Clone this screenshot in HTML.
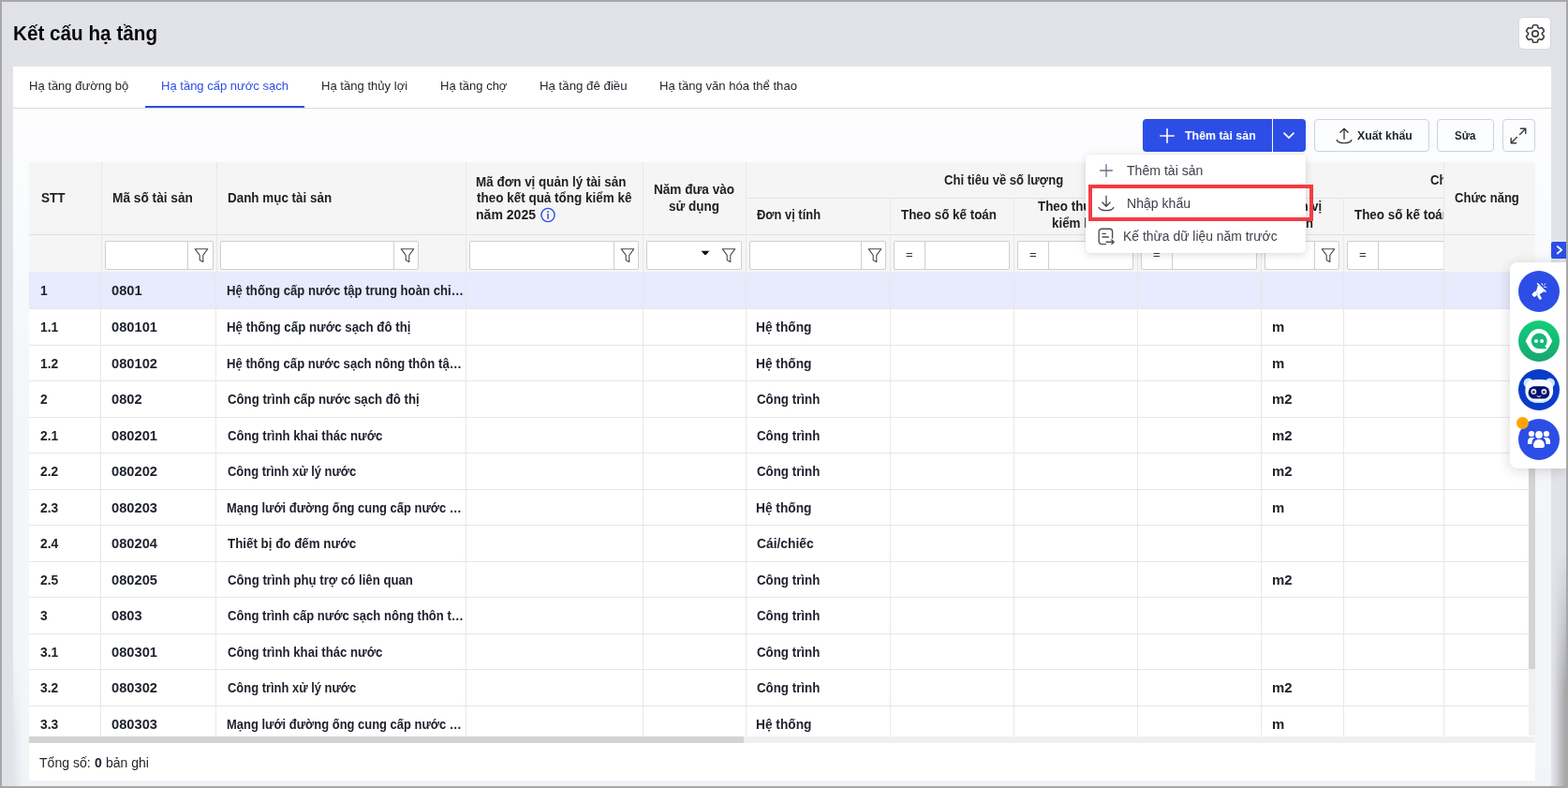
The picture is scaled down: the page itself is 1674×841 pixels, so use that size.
<!DOCTYPE html>
<html lang="vi">
<head>
<meta charset="utf-8">
<title>Kết cấu hạ tầng</title>
<style>
html,body{margin:0;padding:0;}
body{width:1674px;height:841px;overflow:hidden;background:#e2e3e9;font-family:"Liberation Sans",sans-serif;position:relative;}
#page{position:absolute;left:0;top:0;width:1674px;height:841px;overflow:hidden;}
.t{position:absolute;white-space:nowrap;line-height:1;transform-origin:0 50%;font-family:"Liberation Sans",sans-serif;display:block;}
.abs{position:absolute;}
.btn{position:absolute;top:127px;height:35px;box-sizing:border-box;border-radius:4px;}
.btn.w{background:#fcfdfe;border:1px solid #ccd2de;}
svg{display:block;overflow:visible;}
</style>
</head>
<body>
<div id="page">

<!-- gear button -->
<div class="abs" style="left:1621px;top:18px;width:35px;height:35px;box-sizing:border-box;background:#fff;border:1px solid #d3d8e2;border-radius:5px;"></div>
<svg class="abs" style="left:1626.9px;top:24.2px;transform:scale(1.09,1.03);transform-origin:50% 50%" width="24" height="24" viewBox="0 0 24 24" fill="none" stroke="#3f3f3f" stroke-width="1.55" stroke-linecap="round" stroke-linejoin="round">
<path d="M9.594 3.94c.09-.542.56-.94 1.11-.94h2.593c.55 0 1.02.398 1.11.94l.213 1.281c.063.374.313.686.645.87.074.04.147.083.22.127.325.196.72.257 1.075.124l1.217-.456a1.125 1.125 0 0 1 1.37.49l1.296 2.247a1.125 1.125 0 0 1-.26 1.431l-1.003.827c-.293.241-.438.613-.43.992a7.723 7.723 0 0 1 0 .255c-.008.378.137.75.43.991l1.004.827c.424.35.534.955.26 1.43l-1.298 2.247a1.125 1.125 0 0 1-1.369.491l-1.217-.456c-.355-.133-.75-.072-1.076.124a6.47 6.47 0 0 1-.22.128c-.331.183-.581.495-.644.869l-.213 1.281c-.09.543-.56.94-1.11.94h-2.594c-.55 0-1.019-.398-1.11-.94l-.213-1.281c-.062-.374-.312-.686-.644-.87a6.52 6.52 0 0 1-.22-.127c-.325-.196-.72-.257-1.076-.124l-1.217.456a1.125 1.125 0 0 1-1.369-.49l-1.297-2.247a1.125 1.125 0 0 1 .26-1.431l1.004-.827c.292-.24.437-.613.43-.991a6.932 6.932 0 0 1 0-.255c.007-.38-.138-.751-.43-.992l-1.004-.827a1.125 1.125 0 0 1-.26-1.43l1.297-2.247a1.125 1.125 0 0 1 1.37-.491l1.216.456c.356.133.751.072 1.076-.124.072-.044.146-.086.22-.128.332-.183.582-.495.644-.869l.214-1.28Z"/>
<path d="M15 12a3 3 0 1 1-6 0 3 3 0 0 1 6 0Z"/>
</svg>

<!-- card -->
<div class="abs" style="left:14px;top:71px;width:1642px;height:770px;background:linear-gradient(to bottom,#fff 0,#fff 44px,#fdfdfe 45px,#fbfcfe 120px,#f4f6fa 330px,#f3f6f9 740px,#eff3f7 100%);"></div>
<!-- tab line -->
<div class="abs" style="left:14px;top:115px;width:1642px;height:1px;background:#d6dae4;"></div>
<div class="abs" style="left:155px;top:113px;width:170px;height:2px;background:#2c4ee6;"></div>

<!-- toolbar -->
<div class="btn" style="left:1220px;width:138px;background:#2c4ee6;border-radius:4px 0 0 4px;"></div>
<div class="btn" style="left:1359px;width:35px;background:#2c4ee6;border-radius:0 4px 4px 0;"></div>
<svg class="abs" style="left:1238px;top:137px" width="16" height="16" viewBox="0 0 16 16" fill="none" stroke="#fff" stroke-width="1.6" stroke-linecap="round"><path d="M8 0.8v14.4M0.8 8h14.4"/></svg>
<svg class="abs" style="left:1370px;top:141px" width="12" height="8" viewBox="0 0 12 8" fill="none" stroke="#fff" stroke-width="1.7" stroke-linecap="round" stroke-linejoin="round"><path d="M1 1.2l5 5 5-5"/></svg>
<div class="btn w" style="left:1403px;width:123px;"></div>
<svg class="abs" style="left:1426px;top:136px" width="18" height="18" viewBox="0 0 18 18" fill="none" stroke="#3a3a3a" stroke-width="1.4" stroke-linecap="round" stroke-linejoin="round"><path d="M9 12.2V1.4M4.9 5.2L9 1.2l4.1 4"/><path d="M1.2 13.6c1 2.2 3.4 3 7.8 3s6.800-.8 7.800-3"/></svg>
<div class="btn w" style="left:1534px;width:61px;"></div>
<div class="btn w" style="left:1604px;width:35px;"></div>
<svg class="abs" style="left:1612px;top:136px" width="18" height="18" viewBox="0 0 18 18" fill="none" stroke="#3a3a3a" stroke-width="1.4" stroke-linecap="round" stroke-linejoin="round"><path d="M10.6 7.4L16.6 1.4M11.4 1.2h5.400v5.400M7.400 10.600L1.400 16.600M6.600 16.800H1.200v-5.400"/></svg>

<!-- table -->
<div style="position:absolute;left:31px;top:173px;width:1608px;height:118px;background:#f5f5f5;"></div>
<div style="position:absolute;left:31px;top:291px;width:1608px;height:495px;background:#fff;"></div>
<div style="position:absolute;left:31px;top:291px;width:1608px;height:38px;background:#e8eafd;"></div>
<div style="position:absolute;left:31px;top:250px;width:1608px;height:1px;background:#e0e0e0;"></div>
<div style="position:absolute;left:31px;top:290px;width:1608px;height:1px;background:#ebebeb;"></div>
<div style="position:absolute;left:796px;top:211px;width:745px;height:1px;background:#e2e2e2;"></div>
<div style="position:absolute;left:31px;top:329px;width:1608px;height:1px;background:#e6e6e6;"></div>
<div style="position:absolute;left:31px;top:368px;width:1608px;height:1px;background:#e6e6e6;"></div>
<div style="position:absolute;left:31px;top:406px;width:1608px;height:1px;background:#e6e6e6;"></div>
<div style="position:absolute;left:31px;top:445px;width:1608px;height:1px;background:#e6e6e6;"></div>
<div style="position:absolute;left:31px;top:483px;width:1608px;height:1px;background:#e6e6e6;"></div>
<div style="position:absolute;left:31px;top:522px;width:1608px;height:1px;background:#e6e6e6;"></div>
<div style="position:absolute;left:31px;top:560px;width:1608px;height:1px;background:#e6e6e6;"></div>
<div style="position:absolute;left:31px;top:599px;width:1608px;height:1px;background:#e6e6e6;"></div>
<div style="position:absolute;left:31px;top:637px;width:1608px;height:1px;background:#e6e6e6;"></div>
<div style="position:absolute;left:31px;top:676px;width:1608px;height:1px;background:#e6e6e6;"></div>
<div style="position:absolute;left:31px;top:714px;width:1608px;height:1px;background:#e6e6e6;"></div>
<div style="position:absolute;left:31px;top:753px;width:1608px;height:1px;background:#e6e6e6;"></div>
<div style="position:absolute;left:108px;top:173px;width:1px;height:117px;background:#e8e8e8;"></div>
<div style="position:absolute;left:231px;top:173px;width:1px;height:117px;background:#e8e8e8;"></div>
<div style="position:absolute;left:497px;top:173px;width:1px;height:117px;background:#e8e8e8;"></div>
<div style="position:absolute;left:686px;top:173px;width:1px;height:117px;background:#e8e8e8;"></div>
<div style="position:absolute;left:796px;top:173px;width:1px;height:117px;background:#e8e8e8;"></div>
<div style="position:absolute;left:1346px;top:173px;width:1px;height:117px;background:#e8e8e8;"></div>
<div style="position:absolute;left:950px;top:212px;width:1px;height:35px;background:#e8e8e8;"></div>
<div style="position:absolute;left:950px;top:251px;width:1px;height:39px;background:#e8e8e8;"></div>
<div style="position:absolute;left:1082px;top:212px;width:1px;height:35px;background:#e8e8e8;"></div>
<div style="position:absolute;left:1082px;top:251px;width:1px;height:39px;background:#e8e8e8;"></div>
<div style="position:absolute;left:1214px;top:212px;width:1px;height:35px;background:#e8e8e8;"></div>
<div style="position:absolute;left:1214px;top:251px;width:1px;height:39px;background:#e8e8e8;"></div>
<div style="position:absolute;left:1434px;top:212px;width:1px;height:35px;background:#e8e8e8;"></div>
<div style="position:absolute;left:1434px;top:251px;width:1px;height:39px;background:#e8e8e8;"></div>
<div style="position:absolute;left:107px;top:291px;width:1px;height:496px;background:#e8e8e8;"></div>
<div style="position:absolute;left:230px;top:291px;width:1px;height:496px;background:#e8e8e8;"></div>
<div style="position:absolute;left:497px;top:291px;width:1px;height:496px;background:#e8e8e8;"></div>
<div style="position:absolute;left:686px;top:291px;width:1px;height:496px;background:#e8e8e8;"></div>
<div style="position:absolute;left:796px;top:291px;width:1px;height:496px;background:#e8e8e8;"></div>
<div style="position:absolute;left:950px;top:291px;width:1px;height:496px;background:#e8e8e8;"></div>
<div style="position:absolute;left:1082px;top:291px;width:1px;height:496px;background:#e8e8e8;"></div>
<div style="position:absolute;left:1214px;top:291px;width:1px;height:496px;background:#e8e8e8;"></div>
<div style="position:absolute;left:1346px;top:291px;width:1px;height:496px;background:#e8e8e8;"></div>
<div style="position:absolute;left:1434px;top:291px;width:1px;height:496px;background:#e8e8e8;"></div>
<div style="position:absolute;left:112px;top:257px;width:116px;height:31px;background:#fff;border:1px solid #cfcfcf;border-radius:2px;box-sizing:border-box;"></div><div style="position:absolute;left:200px;top:258px;width:1px;height:29px;background:#cfcfcf;"></div>
<svg style="position:absolute;left:207px;top:264px" width="16" height="17" viewBox="0 0 16 17"><path d="M1.2 1.7h13.6l-5 6.6v7.300l-3.600-2.100v-5.200z" fill="none" stroke="#4a4a4a" stroke-width="1.1" stroke-linejoin="round"/></svg>
<div style="position:absolute;left:235px;top:257px;width:212px;height:31px;background:#fff;border:1px solid #cfcfcf;border-radius:2px;box-sizing:border-box;"></div><div style="position:absolute;left:420px;top:258px;width:1px;height:29px;background:#cfcfcf;"></div>
<svg style="position:absolute;left:427px;top:264px" width="16" height="17" viewBox="0 0 16 17"><path d="M1.2 1.7h13.6l-5 6.6v7.300l-3.600-2.100v-5.200z" fill="none" stroke="#4a4a4a" stroke-width="1.1" stroke-linejoin="round"/></svg>
<div style="position:absolute;left:501px;top:257px;width:181px;height:31px;background:#fff;border:1px solid #cfcfcf;border-radius:2px;box-sizing:border-box;"></div><div style="position:absolute;left:655px;top:258px;width:1px;height:29px;background:#cfcfcf;"></div>
<svg style="position:absolute;left:662px;top:264px" width="16" height="17" viewBox="0 0 16 17"><path d="M1.2 1.7h13.6l-5 6.6v7.300l-3.600-2.100v-5.200z" fill="none" stroke="#4a4a4a" stroke-width="1.1" stroke-linejoin="round"/></svg>
<div style="position:absolute;left:690px;top:257px;width:102px;height:31px;background:#fff;border:1px solid #cfcfcf;border-radius:2px;box-sizing:border-box;"></div>
<svg style="position:absolute;left:770px;top:264px" width="16" height="17" viewBox="0 0 16 17"><path d="M1.2 1.7h13.6l-5 6.6v7.300l-3.600-2.100v-5.200z" fill="none" stroke="#4a4a4a" stroke-width="1.1" stroke-linejoin="round"/></svg>
<svg style="position:absolute;left:748px;top:267px" width="10" height="6" viewBox="0 0 10 6"><path d="M0.6 0.8h8.8l-3.2 3.6q-1.2 1.2-2.4 0z" fill="#111"/></svg>
<div style="position:absolute;left:800px;top:257px;width:146px;height:31px;background:#fff;border:1px solid #cfcfcf;border-radius:2px;box-sizing:border-box;"></div><div style="position:absolute;left:919px;top:258px;width:1px;height:29px;background:#cfcfcf;"></div>
<svg style="position:absolute;left:926px;top:264px" width="16" height="17" viewBox="0 0 16 17"><path d="M1.2 1.7h13.6l-5 6.6v7.300l-3.600-2.100v-5.200z" fill="none" stroke="#4a4a4a" stroke-width="1.1" stroke-linejoin="round"/></svg>
<div style="position:absolute;left:954px;top:257px;width:124px;height:31px;background:#fff;border:1px solid #cfcfcf;border-radius:2px;box-sizing:border-box;"></div><div style="position:absolute;left:987px;top:258px;width:1px;height:29px;background:#cfcfcf;"></div>
<div style="position:absolute;left:1086px;top:257px;width:124px;height:31px;background:#fff;border:1px solid #cfcfcf;border-radius:2px;box-sizing:border-box;"></div><div style="position:absolute;left:1119px;top:258px;width:1px;height:29px;background:#cfcfcf;"></div>
<div style="position:absolute;left:1218px;top:257px;width:124px;height:31px;background:#fff;border:1px solid #cfcfcf;border-radius:2px;box-sizing:border-box;"></div><div style="position:absolute;left:1251px;top:258px;width:1px;height:29px;background:#cfcfcf;"></div>
<div style="position:absolute;left:1350px;top:257px;width:80px;height:31px;background:#fff;border:1px solid #cfcfcf;border-radius:2px;box-sizing:border-box;"></div><div style="position:absolute;left:1403px;top:258px;width:1px;height:29px;background:#cfcfcf;"></div>
<svg style="position:absolute;left:1410px;top:264px" width="16" height="17" viewBox="0 0 16 17"><path d="M1.2 1.7h13.6l-5 6.6v7.300l-3.600-2.100v-5.200z" fill="none" stroke="#4a4a4a" stroke-width="1.1" stroke-linejoin="round"/></svg>
<div style="position:absolute;left:1438px;top:257px;width:124px;height:31px;background:#fff;border:1px solid #cfcfcf;border-radius:2px;box-sizing:border-box;"></div><div style="position:absolute;left:1471px;top:258px;width:1px;height:29px;background:#cfcfcf;"></div>
<!-- fixed column -->
<div class="abs" style="left:1541px;top:173px;width:98px;height:118px;background:#f5f5f5;"></div>
<div class="abs" style="left:1541px;top:291px;width:98px;height:495px;background:#fff;"></div>
<div class="abs" style="left:1541px;top:291px;width:98px;height:38px;background:#e8eafd;"></div>
<div style="position:absolute;left:1541px;top:173px;width:1px;height:613px;background:#e8e8e8;"></div>
<div style="position:absolute;left:1541px;top:250px;width:98px;height:1px;background:#e0e0e0;"></div>
<div style="position:absolute;left:1541px;top:290px;width:98px;height:1px;background:#ebebeb;"></div>
<div style="position:absolute;left:1541px;top:329px;width:98px;height:1px;background:#e6e6e6;"></div>
<div style="position:absolute;left:1541px;top:368px;width:98px;height:1px;background:#e6e6e6;"></div>
<div style="position:absolute;left:1541px;top:406px;width:98px;height:1px;background:#e6e6e6;"></div>
<div style="position:absolute;left:1541px;top:445px;width:98px;height:1px;background:#e6e6e6;"></div>
<div style="position:absolute;left:1541px;top:483px;width:98px;height:1px;background:#e6e6e6;"></div>
<div style="position:absolute;left:1541px;top:522px;width:98px;height:1px;background:#e6e6e6;"></div>
<div style="position:absolute;left:1541px;top:560px;width:98px;height:1px;background:#e6e6e6;"></div>
<div style="position:absolute;left:1541px;top:599px;width:98px;height:1px;background:#e6e6e6;"></div>
<div style="position:absolute;left:1541px;top:637px;width:98px;height:1px;background:#e6e6e6;"></div>
<div style="position:absolute;left:1541px;top:676px;width:98px;height:1px;background:#e6e6e6;"></div>
<div style="position:absolute;left:1541px;top:714px;width:98px;height:1px;background:#e6e6e6;"></div>
<div style="position:absolute;left:1541px;top:753px;width:98px;height:1px;background:#e6e6e6;"></div>

<!-- scrollbars -->
<div class="abs" style="left:1632px;top:290px;width:7px;height:496px;background:#f0f0f0;"></div>
<div class="abs" style="left:1632px;top:290px;width:7px;height:424px;background:#d3d3d3;"></div>
<div class="abs" style="left:794px;top:785px;width:845px;height:1px;background:#fff;"></div>
<div class="abs" style="left:31px;top:786px;width:1607px;height:7px;background:#f0f0f0;"></div>
<div class="abs" style="left:31px;top:786px;width:763px;height:7px;background:#d3d3d3;"></div>
<!-- footer -->
<div class="abs" style="left:31px;top:793px;width:1608px;height:40px;background:#fff;"></div>
<!--FOOTTXT-->

<span class="t" style="left:13.74px;top:24px;font-size:22.66px;font-weight:700;color:#0a0a0a;transform:scaleX(0.9132);">Kết cấu hạ tầng</span>
<span class="t" style="left:31.25px;top:85px;font-size:13.39px;font-weight:400;color:#1f2229;transform:scaleX(0.9734);">Hạ tầng đường bộ</span>
<span class="t" style="left:172.25px;top:85px;font-size:13.39px;font-weight:400;color:#2c4ee6;transform:scaleX(0.9738);">Hạ tầng cấp nước sạch</span>
<span class="t" style="left:342.75px;top:85px;font-size:13.39px;font-weight:400;color:#1f2229;transform:scaleX(0.9772);">Hạ tầng thủy lợi</span>
<span class="t" style="left:470.25px;top:85px;font-size:13.39px;font-weight:400;color:#1f2229;transform:scaleX(0.9717);">Hạ tầng chợ</span>
<span class="t" style="left:576.25px;top:85px;font-size:13.39px;font-weight:400;color:#1f2229;transform:scaleX(0.9908);">Hạ tầng đê điều</span>
<span class="t" style="left:704.25px;top:85px;font-size:13.39px;font-weight:400;color:#1f2229;transform:scaleX(0.9783);">Hạ tầng văn hóa thể thao</span>
<span class="t" style="left:43.55px;top:204px;font-size:14.42px;font-weight:700;color:#212121;transform:scaleX(0.9417);">STT</span>
<span class="t" style="left:119.75px;top:204px;font-size:14.42px;font-weight:700;color:#212121;transform:scaleX(0.9501);">Mã số tài sản</span>
<span class="t" style="left:242.75px;top:204px;font-size:14.42px;font-weight:700;color:#212121;transform:scaleX(0.9314);">Danh mục tài sản</span>
<span class="t" style="left:508.25px;top:187px;font-size:14.42px;font-weight:700;color:#212121;transform:scaleX(0.9335);">Mã đơn vị quản lý tài sản</span>
<span class="t" style="left:509.17px;top:204px;font-size:14.42px;font-weight:700;color:#212121;transform:scaleX(0.9354);">theo kết quả tổng kiểm kê</span>
<span class="t" style="left:508.25px;top:222px;font-size:14.42px;font-weight:700;color:#212121;transform:scaleX(0.9749);">năm 2025</span>
<span class="t" style="left:698.25px;top:195px;font-size:14.42px;font-weight:700;color:#212121;transform:scaleX(0.9421);">Năm đưa vào</span>
<span class="t" style="left:713.96px;top:213px;font-size:14.42px;font-weight:700;color:#212121;transform:scaleX(0.9378);">sử dụng</span>
<span class="t" style="left:1007.85px;top:185px;font-size:14.42px;font-weight:700;color:#212121;transform:scaleX(0.9086);">Chỉ tiêu về số lượng</span>
<span class="t" style="left:808.25px;top:222px;font-size:14.42px;font-weight:700;color:#212121;transform:scaleX(0.8969);">Đơn vị tính</span>
<span class="t" style="left:962.25px;top:222px;font-size:14.42px;font-weight:700;color:#212121;transform:scaleX(0.9300);">Theo số kế toán</span>
<span class="t" style="left:1107.55px;top:213px;font-size:14.42px;font-weight:700;color:#212121;transform:scaleX(0.9299);">Theo thực tế</span>
<span class="t" style="left:1122.55px;top:231px;font-size:14.42px;font-weight:700;color:#212121;transform:scaleX(0.9299);">kiểm kê</span>
<span class="t" style="left:1370.45px;top:213px;font-size:14.42px;font-weight:700;color:#212121;transform:scaleX(0.9038);">Đơn vị</span>
<span class="t" style="left:1378.05px;top:231px;font-size:14.42px;font-weight:700;color:#212121;transform:scaleX(0.9036);">tính</span>
<div class="abs" style="left:1446px;top:218px;width:95px;height:22.42px;overflow:hidden;"><span class="t" style="left:0.25px;top:4px;font-size:14.42px;font-weight:700;color:#212121;transform:scaleX(0.9300);">Theo số kế toán</span></div>
<div class="abs" style="left:1526px;top:181px;width:15px;height:22.42px;overflow:hidden;"><span class="t" style="left:0.58px;top:4px;font-size:14.42px;font-weight:700;color:#212121;transform:scaleX(0.9136);">Chỉ tiêu về giá trị</span></div>
<span class="t" style="left:1552.88px;top:204px;font-size:14.42px;font-weight:700;color:#212121;transform:scaleX(0.9050);">Chức năng</span>
<span class="t" style="left:43.00px;top:303px;font-size:14.42px;font-weight:700;color:#1d212b;transform:scaleX(0.9600);">1</span>
<span class="t" style="left:119.00px;top:303px;font-size:14.42px;font-weight:700;color:#1d212b;transform:scaleX(1.0200);">0801</span>
<span class="t" style="left:241.75px;top:303px;font-size:14.42px;font-weight:700;color:#1d212b;transform:scaleX(0.9135);">Hệ thống cấp nước tập trung hoàn chỉ…</span>
<span class="t" style="left:43.00px;top:342px;font-size:14.42px;font-weight:700;color:#1d212b;transform:scaleX(0.9600);">1.1</span>
<span class="t" style="left:119.00px;top:342px;font-size:14.42px;font-weight:700;color:#1d212b;transform:scaleX(1.0200);">080101</span>
<span class="t" style="left:241.75px;top:342px;font-size:14.42px;font-weight:700;color:#1d212b;transform:scaleX(0.9235);">Hệ thống cấp nước sạch đô thị</span>
<span class="t" style="left:807.25px;top:342px;font-size:14.42px;font-weight:700;color:#1d212b;transform:scaleX(0.9517);">Hệ thống</span>
<span class="t" style="left:1358.25px;top:342px;font-size:14.42px;font-weight:700;color:#1d212b;transform:scaleX(1.0349);">m</span>
<span class="t" style="left:43.00px;top:381px;font-size:14.42px;font-weight:700;color:#1d212b;transform:scaleX(0.9600);">1.2</span>
<span class="t" style="left:119.00px;top:381px;font-size:14.42px;font-weight:700;color:#1d212b;transform:scaleX(1.0200);">080102</span>
<span class="t" style="left:241.75px;top:381px;font-size:14.42px;font-weight:700;color:#1d212b;transform:scaleX(0.9114);">Hệ thống cấp nước sạch nông thôn tậ…</span>
<span class="t" style="left:807.25px;top:381px;font-size:14.42px;font-weight:700;color:#1d212b;transform:scaleX(0.9517);">Hệ thống</span>
<span class="t" style="left:1358.25px;top:381px;font-size:14.42px;font-weight:700;color:#1d212b;transform:scaleX(1.0349);">m</span>
<span class="t" style="left:43.00px;top:419px;font-size:14.42px;font-weight:700;color:#1d212b;transform:scaleX(0.9600);">2</span>
<span class="t" style="left:119.00px;top:419px;font-size:14.42px;font-weight:700;color:#1d212b;transform:scaleX(1.0200);">0802</span>
<span class="t" style="left:242.79px;top:419px;font-size:14.42px;font-weight:700;color:#1d212b;transform:scaleX(0.9175);">Công trình cấp nước sạch đô thị</span>
<span class="t" style="left:808.30px;top:419px;font-size:14.42px;font-weight:700;color:#1d212b;transform:scaleX(0.9239);">Công trình</span>
<span class="t" style="left:1358.25px;top:419px;font-size:14.42px;font-weight:700;color:#1d212b;transform:scaleX(1.0350);">m2</span>
<span class="t" style="left:43.00px;top:458px;font-size:14.42px;font-weight:700;color:#1d212b;transform:scaleX(0.9600);">2.1</span>
<span class="t" style="left:119.00px;top:458px;font-size:14.42px;font-weight:700;color:#1d212b;transform:scaleX(1.0200);">080201</span>
<span class="t" style="left:242.84px;top:458px;font-size:14.42px;font-weight:700;color:#1d212b;transform:scaleX(0.9147);">Công trình khai thác nước</span>
<span class="t" style="left:808.30px;top:458px;font-size:14.42px;font-weight:700;color:#1d212b;transform:scaleX(0.9239);">Công trình</span>
<span class="t" style="left:1358.25px;top:458px;font-size:14.42px;font-weight:700;color:#1d212b;transform:scaleX(1.0350);">m2</span>
<span class="t" style="left:43.00px;top:496px;font-size:14.42px;font-weight:700;color:#1d212b;transform:scaleX(0.9600);">2.2</span>
<span class="t" style="left:119.00px;top:496px;font-size:14.42px;font-weight:700;color:#1d212b;transform:scaleX(1.0200);">080202</span>
<span class="t" style="left:242.85px;top:496px;font-size:14.42px;font-weight:700;color:#1d212b;transform:scaleX(0.8985);">Công trình xử lý nước</span>
<span class="t" style="left:808.30px;top:496px;font-size:14.42px;font-weight:700;color:#1d212b;transform:scaleX(0.9239);">Công trình</span>
<span class="t" style="left:1358.25px;top:496px;font-size:14.42px;font-weight:700;color:#1d212b;transform:scaleX(1.0350);">m2</span>
<span class="t" style="left:43.00px;top:535px;font-size:14.42px;font-weight:700;color:#1d212b;transform:scaleX(0.9600);">2.3</span>
<span class="t" style="left:119.00px;top:535px;font-size:14.42px;font-weight:700;color:#1d212b;transform:scaleX(1.0200);">080203</span>
<span class="t" style="left:241.75px;top:535px;font-size:14.42px;font-weight:700;color:#1d212b;transform:scaleX(0.8992);">Mạng lưới đường ống cung cấp nước …</span>
<span class="t" style="left:807.25px;top:535px;font-size:14.42px;font-weight:700;color:#1d212b;transform:scaleX(0.9517);">Hệ thống</span>
<span class="t" style="left:1358.25px;top:535px;font-size:14.42px;font-weight:700;color:#1d212b;transform:scaleX(1.0349);">m</span>
<span class="t" style="left:43.00px;top:573px;font-size:14.42px;font-weight:700;color:#1d212b;transform:scaleX(0.9600);">2.4</span>
<span class="t" style="left:119.00px;top:573px;font-size:14.42px;font-weight:700;color:#1d212b;transform:scaleX(1.0200);">080204</span>
<span class="t" style="left:242.75px;top:573px;font-size:14.42px;font-weight:700;color:#1d212b;transform:scaleX(0.9269);">Thiết bị đo đếm nước</span>
<span class="t" style="left:808.21px;top:573px;font-size:14.42px;font-weight:700;color:#1d212b;transform:scaleX(0.9571);">Cái/chiếc</span>
<span class="t" style="left:43.00px;top:612px;font-size:14.42px;font-weight:700;color:#1d212b;transform:scaleX(0.9600);">2.5</span>
<span class="t" style="left:119.00px;top:612px;font-size:14.42px;font-weight:700;color:#1d212b;transform:scaleX(1.0200);">080205</span>
<span class="t" style="left:242.79px;top:612px;font-size:14.42px;font-weight:700;color:#1d212b;transform:scaleX(0.9167);">Công trình phụ trợ có liên quan</span>
<span class="t" style="left:808.30px;top:612px;font-size:14.42px;font-weight:700;color:#1d212b;transform:scaleX(0.9239);">Công trình</span>
<span class="t" style="left:1358.25px;top:612px;font-size:14.42px;font-weight:700;color:#1d212b;transform:scaleX(1.0350);">m2</span>
<span class="t" style="left:43.00px;top:650px;font-size:14.42px;font-weight:700;color:#1d212b;transform:scaleX(0.9600);">3</span>
<span class="t" style="left:119.00px;top:650px;font-size:14.42px;font-weight:700;color:#1d212b;transform:scaleX(1.0200);">0803</span>
<span class="t" style="left:242.85px;top:650px;font-size:14.42px;font-weight:700;color:#1d212b;transform:scaleX(0.9075);">Công trình cấp nước sạch nông thôn t…</span>
<span class="t" style="left:808.30px;top:650px;font-size:14.42px;font-weight:700;color:#1d212b;transform:scaleX(0.9239);">Công trình</span>
<span class="t" style="left:43.00px;top:689px;font-size:14.42px;font-weight:700;color:#1d212b;transform:scaleX(0.9600);">3.1</span>
<span class="t" style="left:119.00px;top:689px;font-size:14.42px;font-weight:700;color:#1d212b;transform:scaleX(1.0200);">080301</span>
<span class="t" style="left:242.84px;top:689px;font-size:14.42px;font-weight:700;color:#1d212b;transform:scaleX(0.9147);">Công trình khai thác nước</span>
<span class="t" style="left:808.30px;top:689px;font-size:14.42px;font-weight:700;color:#1d212b;transform:scaleX(0.9239);">Công trình</span>
<span class="t" style="left:43.00px;top:727px;font-size:14.42px;font-weight:700;color:#1d212b;transform:scaleX(0.9600);">3.2</span>
<span class="t" style="left:119.00px;top:727px;font-size:14.42px;font-weight:700;color:#1d212b;transform:scaleX(1.0200);">080302</span>
<span class="t" style="left:242.85px;top:727px;font-size:14.42px;font-weight:700;color:#1d212b;transform:scaleX(0.8985);">Công trình xử lý nước</span>
<span class="t" style="left:808.30px;top:727px;font-size:14.42px;font-weight:700;color:#1d212b;transform:scaleX(0.9239);">Công trình</span>
<span class="t" style="left:1358.25px;top:727px;font-size:14.42px;font-weight:700;color:#1d212b;transform:scaleX(1.0350);">m2</span>
<span class="t" style="left:43.00px;top:766px;font-size:14.42px;font-weight:700;color:#1d212b;transform:scaleX(0.9600);">3.3</span>
<span class="t" style="left:119.00px;top:766px;font-size:14.42px;font-weight:700;color:#1d212b;transform:scaleX(1.0200);">080303</span>
<span class="t" style="left:241.75px;top:766px;font-size:14.42px;font-weight:700;color:#1d212b;transform:scaleX(0.8992);">Mạng lưới đường ống cung cấp nước …</span>
<span class="t" style="left:807.25px;top:766px;font-size:14.42px;font-weight:700;color:#1d212b;transform:scaleX(0.9517);">Hệ thống</span>
<span class="t" style="left:1358.25px;top:766px;font-size:14.42px;font-weight:700;color:#1d212b;transform:scaleX(1.0349);">m</span>
<span class="t" style="left:42.24px;top:807px;font-size:14.42px;font-weight:400;color:#1f2229;transform:scaleX(0.9767);">Tổng số:</span>
<span class="t" style="left:100.60px;top:807px;font-size:14.42px;font-weight:700;color:#1f2229;transform:scaleX(0.9727);">0</span>
<span class="t" style="left:113.00px;top:807px;font-size:14.42px;font-weight:400;color:#1f2229;transform:scaleX(0.9719);">bản ghi</span>
<span class="t" style="left:1265.25px;top:138px;font-size:13.39px;font-weight:700;color:#fff;transform:scaleX(0.9258);">Thêm tài sản</span>
<span class="t" style="left:1449.00px;top:138px;font-size:13.39px;font-weight:700;color:#1f2229;transform:scaleX(0.9193);">Xuất khẩu</span>
<span class="t" style="left:1553.25px;top:138px;font-size:13.39px;font-weight:700;color:#1f2229;transform:scaleX(0.8617);">Sửa</span>
<div class="abs" style="left:967px;top:261px;width:574px;height:21.39px;overflow:hidden;"><span class="t" style="left:0.09px;top:4px;font-size:13.39px;font-weight:400;color:#333;transform:scaleX(0.9720);">=</span></div>
<div class="abs" style="left:1099px;top:261px;width:442px;height:21.39px;overflow:hidden;"><span class="t" style="left:0.09px;top:4px;font-size:13.39px;font-weight:400;color:#333;transform:scaleX(0.9720);">=</span></div>
<div class="abs" style="left:1231px;top:261px;width:310px;height:21.39px;overflow:hidden;"><span class="t" style="left:0.09px;top:4px;font-size:13.39px;font-weight:400;color:#333;transform:scaleX(0.9720);">=</span></div>
<div class="abs" style="left:1451px;top:261px;width:90px;height:21.39px;overflow:hidden;"><span class="t" style="left:0.09px;top:4px;font-size:13.39px;font-weight:400;color:#333;transform:scaleX(0.9720);">=</span></div>
<!-- info icon -->
<svg class="abs" style="left:577px;top:221px" width="16" height="17" viewBox="0 0 16 17" fill="none"><circle cx="8" cy="8.500" r="7.1" stroke="#2c4ee6" stroke-width="1.4"/><path d="M8 7.500v4.800" stroke="#2c4ee6" stroke-width="1.500" stroke-linecap="round"/><circle cx="8" cy="5" r="0.95" fill="#2c4ee6"/></svg>

<!-- dropdown menu -->
<div class="abs" style="left:1159px;top:165px;width:235px;height:105px;background:#fff;border-radius:5px;box-shadow:0 2px 10px rgba(0,0,0,.13),0 0 2px rgba(0,0,0,.05);"></div>
<svg class="abs" style="left:1174px;top:175px" width="14" height="14" viewBox="0 0 14 14" fill="none" stroke="#6b7180" stroke-width="1.3" stroke-linecap="round"><path d="M7 0.6v12.800M0.600 7h12.800"/></svg>
<svg class="abs" style="left:1172px;top:208px" width="18" height="18" viewBox="0 0 18 18" fill="none" stroke="#4a4d55" stroke-width="1.35" stroke-linecap="round" stroke-linejoin="round"><path d="M9 1.2v10.800M4.900 8L9 12.200l4.100-4.200"/><path d="M1.200 13.400c1 2.400 3.400 3.200 7.800 3.200s6.800-.8 7.800-3.200"/></svg>
<svg class="abs" style="left:1172px;top:243px" width="18" height="19" viewBox="0 0 18 19" fill="none" stroke="#4a4d55" stroke-width="1.35" stroke-linecap="round" stroke-linejoin="round"><path d="M15.600 11V4.200a3 3 0 0 0-3-3H4.200a3 3 0 0 0-3 3v10.400a3 3 0 0 0 3 3h4.400"/><path d="M5 6.400h3.400M5 10h6.400"/><path d="M9 15.200h8M14.800 13l2.400 2.200-2.400 2.200"/></svg>
<span class="t" style="left:1203.49px;top:175px;font-size:14.42px;font-weight:400;color:#3b3f48;transform:scaleX(0.9776);">Thêm tài sản</span>
<span class="t" style="left:1203.19px;top:210px;font-size:14.42px;font-weight:400;color:#3b3f48;transform:scaleX(0.9776);">Nhập khẩu</span>
<span class="t" style="left:1199.22px;top:245px;font-size:14.42px;font-weight:400;color:#3b3f48;transform:scaleX(0.9656);">Kế thừa dữ liệu năm trước</span>
<div class="abs" style="left:1162px;top:197px;width:240px;height:39px;box-sizing:border-box;border:4px solid #f43b42;"></div>

<!-- blue side tab -->
<div class="abs" style="left:1656px;top:258px;width:16px;height:18px;background:#2c4ee6;border-radius:2px 0 0 2px;"></div>
<svg class="abs" style="left:1661px;top:261px" width="8" height="12" viewBox="0 0 8 12" fill="none" stroke="#fff" stroke-width="1.700" stroke-linecap="round" stroke-linejoin="round"><path d="M1.700 2l4.500 3.750-4.500 3.750"/></svg>

<!-- floating panel -->
<div class="abs" style="left:1612px;top:280px;width:60px;height:220px;background:#fff;border-radius:8px 0 0 8px;box-shadow:0 2px 14px rgba(0,0,0,.16);"></div>
<div class="abs" style="left:1621px;top:289px;width:44px;height:44px;border-radius:50%;background:#2c4ee6;"></div>
<div class="abs" style="left:1621px;top:342px;width:44px;height:44px;border-radius:50%;background:linear-gradient(to bottom,#12cf78,#17a673);"></div>
<div class="abs" style="left:1621px;top:394px;width:44px;height:44px;border-radius:50%;background:#0a3cc9;"></div>
<div class="abs" style="left:1621px;top:447px;width:44px;height:44px;border-radius:50%;background:#2c4ee6;"></div>

<svg class="abs" style="left:1621px;top:289px" width="44" height="44" viewBox="0 0 44 44">
 <g fill="#fff" stroke="none">
  <path d="M20.9 15.3l6.800 6.800-4.100 2.300-1.500 1.500-3.900-3.900 1.300-1.600z"/>
  <rect x="-2.200" y="-2.600" width="4.400" height="5.200" rx="1.300" transform="translate(17.500 25) rotate(45)"/>
 </g>
 <g fill="none" stroke="#fff" stroke-linecap="round">
  <path d="M20.500 13.700l8.400 8.400" stroke-width="1.500"/>
  <path d="M21.500 26.300l1.800 2.900" stroke-width="3"/>
  <path d="M25 13.400l.7 1.700M28.700 13.700l-1.500 1.800M29.900 17.300l-2.400.1" stroke-width="0.9"/>
 </g>
</svg>
<svg class="abs" style="left:1621px;top:342px" width="44" height="44" viewBox="0 0 44 44">
 <path d="M7.700 22c1.600-3 3-6.200 5.300-9 2.400-2.700 5.500-4 9-4s6.600 1.300 9 4c2.300 2.800 3.700 6 5.300 9-1.600 3-3 6.200-5.300 9-2.400 2.700-5.500 4-9 4s-6.600-1.300-9-4c-2.300-2.800-3.700-6-5.300-9z" fill="#fff"/>
 <path d="M22 13.800a8.200 8.200 0 1 0 0 16.400h7.700c.5 0 .7-.5.300-.9l-1.700-1.600A8.200 8.200 0 0 0 22 13.800z" fill="#14b877"/>
 <circle cx="19" cy="22" r="2" fill="#fff"/><circle cx="25.100" cy="22" r="2" fill="#fff"/>
</svg>
<svg class="abs" style="left:1621px;top:394px" width="44" height="44" viewBox="0 0 44 44">
 <circle cx="10.800" cy="14.800" r="5.200" fill="#cfe4fb"/><circle cx="33.800" cy="14.600" r="5.200" fill="#cfe4fb"/>
 <path d="M12 12.200q10-2.400 20.500 0c3.400 1.800 4.600 6 4.600 11.300 0 8-6.400 12.500-15 12.500S7.400 31.500 7.400 23.500c0-5.300 1.200-9.500 4.600-11.300z" fill="#f7fbff"/>
 <path d="M9 30q13 8 26 0-3.500 6-13 6T9 30z" fill="#d4e8fc"/>
 <rect x="10.600" y="18.300" width="22.800" height="13.300" rx="6.600" fill="#05106e"/>
 <circle cx="16.400" cy="24" r="2.900" fill="#e9eef5"/><circle cx="27.400" cy="24" r="2.900" fill="#e9eef5"/>
 <circle cx="16.400" cy="24.300" r="1.500" fill="#3a4470"/><circle cx="27.400" cy="24.300" r="1.500" fill="#3a4470"/>
 <path d="M20 28.800q2 1.600 4 0" stroke="#e9eef5" stroke-width="1" fill="none" stroke-linecap="round"/>
</svg>
<svg class="abs" style="left:1621px;top:447px" width="44" height="44" viewBox="0 0 44 44" fill="#fff">
 <circle cx="14" cy="16" r="3.100"/><circle cx="30" cy="16" r="3.100"/>
 <path d="M10 26.900v-3.200c0-2.200 1.700-3.700 4.200-3.700h3.200c-2 1.400-3 3.600-3 6.900z"/>
 <path d="M34 26.900v-3.200c0-2.200-1.700-3.700-4.200-3.700h-3.200c2 1.400 3 3.600 3 6.900z"/>
 <circle cx="22" cy="17" r="3.900"/>
 <path d="M16 28.600c0-4 2.400-6.600 6-6.600s6 2.600 6 6.600c0 1.500-.9 2.400-2.400 2.400h-7.200c-1.500 0-2.400-.9-2.400-2.400z"/>
</svg>
<div class="abs" style="left:1619px;top:445px;width:13px;height:13px;border-radius:50%;background:#ffa500;"></div>


<!-- edge shadow -->
<div class="abs" style="left:14px;top:700px;width:12px;height:139px;background:linear-gradient(to right,rgba(90,95,110,.10) 0,rgba(90,95,110,.04) 50%,rgba(90,95,110,0) 100%);-webkit-mask-image:linear-gradient(to bottom,rgba(0,0,0,0) 0,#000 60%);mask-image:linear-gradient(to bottom,rgba(0,0,0,0) 0,#000 60%);"></div>
<div class="abs" style="left:1657px;top:585px;width:15px;height:254px;background:linear-gradient(to right,rgba(90,90,92,0) 0,rgba(90,90,92,.07) 22%,rgba(90,90,92,.26) 58%,rgba(90,90,92,.46) 100%);-webkit-mask-image:linear-gradient(to bottom,rgba(0,0,0,0) 0,rgba(0,0,0,.55) 35%,#000 60%);mask-image:linear-gradient(to bottom,rgba(0,0,0,0) 0,rgba(0,0,0,.55) 35%,#000 60%);"></div>
<!-- outer frame -->
<div class="abs" style="left:0;top:0;width:1674px;height:2px;background:#a7a7a7;"></div>
<div class="abs" style="left:0;top:0;width:2px;height:841px;background:#a7a7a7;"></div>
<div class="abs" style="left:1672px;top:0;width:2px;height:841px;background:#a7a7a7;"></div>
<div class="abs" style="left:0;top:839px;width:1674px;height:2px;background:#a7a7a7;"></div>
</div>
</body>
</html>
